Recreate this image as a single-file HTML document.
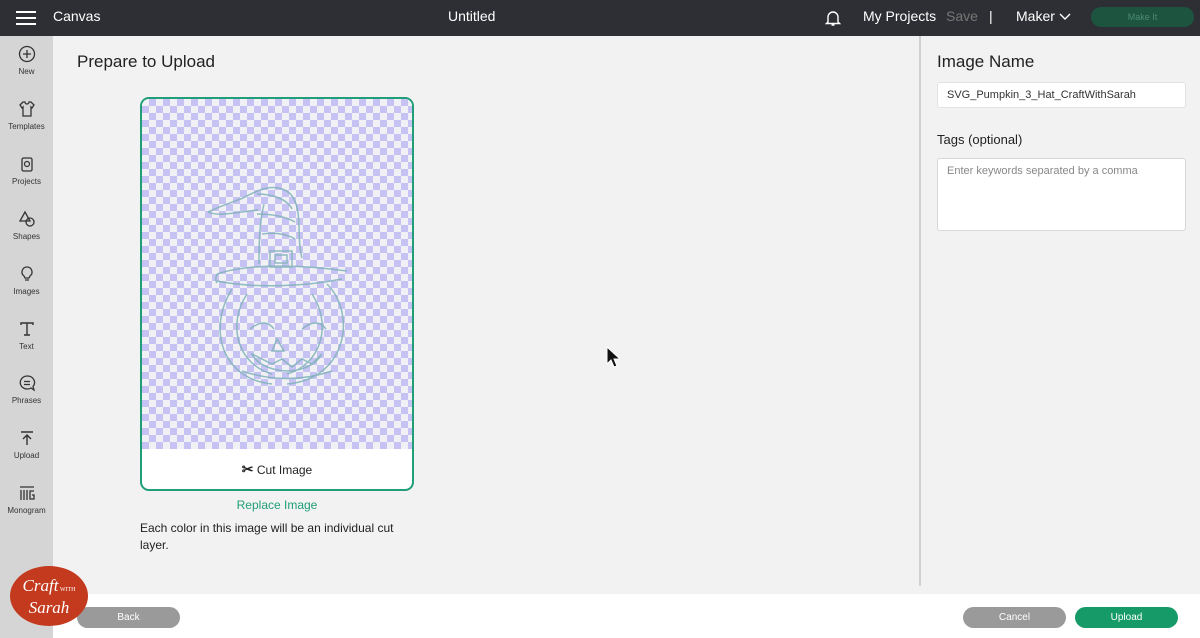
<!DOCTYPE html>
<html><head><meta charset="utf-8"><style>
*{margin:0;padding:0;box-sizing:border-box}
body{width:1200px;height:638px;overflow:hidden;background:#f2f2f2;font-family:"Liberation Sans",sans-serif;position:relative}
.top{position:absolute;left:0;top:0;width:1200px;height:36px;background:#2d2f34;color:#fff}
.top div{position:absolute;top:8px;font-size:14px}
.side{position:absolute;left:0;top:36px;width:53px;height:602px;background:#d5d5d5}
.si{position:absolute;left:0;width:53px;text-align:center;font-size:8px;color:#333}
.si svg{display:block;margin:0 auto 4px}
.bottom{position:absolute;left:53px;top:594px;width:1147px;height:44px;background:#fff}
.btn{position:absolute;top:607px;height:21px;border-radius:11px;color:#fff;font-size:10px;text-align:center;line-height:21px}
.card{position:absolute;left:140px;top:97px;width:274px;height:394px;border:2px solid #1f9e78;border-radius:9px;background:#fff;overflow:hidden}
.chk{position:absolute;left:0;top:0;width:270px;height:350px;background-color:#f1f1f5;background-image:linear-gradient(45deg,#c6c2f3 25%,transparent 25%,transparent 75%,#c6c2f3 75%),linear-gradient(45deg,#c6c2f3 25%,transparent 25%,transparent 75%,#c6c2f3 75%);background-size:14px 14px;background-position:0 0,7px 7px}
</style></head><body>
<div class="top">
<svg style="position:absolute;left:16px;top:10px" width="20" height="16"><path d="M0 2h20M0 8h20M0 14h20" stroke="#fff" stroke-width="2"/></svg>
<div style="left:53px">Canvas</div>
<div style="left:448px">Untitled</div>
<svg style="position:absolute;left:825px;top:9px" width="16" height="18" viewBox="0 0 16 18"><path d="M3 13V8a5 5 0 0 1 10 0v5l1.5 1.5h-13zM6.5 16h3" fill="none" stroke="#fff" stroke-width="1.4"/></svg>
<div style="left:863px">My Projects</div>
<div style="left:946px;color:#777">Save</div>
<div style="left:989px">|</div>
<div style="left:1016px">Maker</div>
<svg style="position:absolute;left:1059px;top:13px" width="12" height="8"><path d="M1 1l5 5 5-5" fill="none" stroke="#fff" stroke-width="1.4"/></svg>
<div style="left:1091px;top:7px;width:103px;height:20px;background:#1c5440;border-radius:10px;font-size:9px;color:#4c8a73;text-align:center;line-height:20px">Make It</div>
</div>
<div class="side">
<div class="si" style="top:9px"><svg width="18" height="18"><circle cx="9" cy="9" r="7.5" fill="none" stroke="#333" stroke-width="1.3"/><path d="M9 5v8M5 9h8" stroke="#333" stroke-width="1.3"/></svg>New</div>
<div class="si" style="top:64px"><svg width="18" height="18"><path d="M5 2l-3 3 2 3 1-1v9h8V7l1 1 2-3-3-3h-2a2 2 0 0 1-4 0z" fill="none" stroke="#333" stroke-width="1.3"/></svg>Templates</div>
<div class="si" style="top:119px"><svg width="18" height="18"><rect x="4" y="3" width="10" height="13" rx="1.5" fill="none" stroke="#333" stroke-width="1.3"/><circle cx="9" cy="9" r="2.5" fill="none" stroke="#333" stroke-width="1.2"/></svg>Projects</div>
<div class="si" style="top:174px"><svg width="18" height="18"><path d="M7 2L2 11h10z" fill="none" stroke="#333" stroke-width="1.3"/><circle cx="12" cy="12" r="4" fill="none" stroke="#333" stroke-width="1.3"/></svg>Shapes</div>
<div class="si" style="top:229px"><svg width="18" height="18"><path d="M9 2a5 5 0 0 0-3 9l1 2h4l1-2a5 5 0 0 0-3-9zM7 15h4" fill="none" stroke="#333" stroke-width="1.3"/></svg>Images</div>
<div class="si" style="top:284px"><svg width="18" height="18"><path d="M3 5V3h12v2M9 3v12M6 15h6" fill="none" stroke="#333" stroke-width="1.4"/></svg>Text</div>
<div class="si" style="top:338px"><svg width="18" height="18"><path d="M9 2a7 6.5 0 1 0 4 12l3 2-1-3.5A7 6.5 0 0 0 9 2z" fill="none" stroke="#333" stroke-width="1.3"/><path d="M6 7.5h6M6 10.5h6" stroke="#333" stroke-width="1.2"/></svg>Phrases</div>
<div class="si" style="top:393px"><svg width="18" height="18"><path d="M3 3h12M9 16V6M5 10l4-4 4 4" fill="none" stroke="#333" stroke-width="1.4"/></svg>Upload</div>
<div class="si" style="top:448px"><svg width="18" height="18"><path d="M2 3h14M3 6v10M6 6v10M9 6v10M16 7h-4v8h4v-4h-2" fill="none" stroke="#333" stroke-width="1.3"/></svg>Monogram</div>
</div>
<div style="position:absolute;left:77px;top:52px;font-size:17px;color:#222">Prepare to Upload</div>
<div class="card">
<div class="chk"></div>
<svg style="position:absolute;left:0;top:0" width="270" height="350" viewBox="0 0 270 350"><g fill="none" stroke="#7fb2b8" stroke-width="1.5" opacity="0.85">
<path d="M66 113c10-5 25-10 35-14 15-8 25-12 35-10 12 2 18 10 20 25 2 15 0 30 4 45"/>
<path d="M66 113c10 5 30 0 50-2"/><path d="M115 95c15 0 30 5 35 15M115 115c15 0 30 3 38 8M120 135c12-2 25 0 33 5"/>
<path d="M122 105c-5 20-5 45-5 60"/>
<path d="M75 175c30-10 80-10 130-3M75 182c40 8 90 5 125-2M75 175c-2 5-1 8 0 9"/>
<rect x="128" y="152" width="22" height="16"/><rect x="133" y="156" width="12" height="8"/>
<path d="M90 190c-25 40-10 90 40 95M185 185c30 30 20 95-40 100M105 195c-20 30-10 70 25 80M170 195c20 30 10 70-25 80"/>
<path d="M108 230c10-8 18-8 24 0M160 230c10-8 18-8 24 0M135 240l-5 12h12zM110 255c10 20 55 25 70 0l-10 10-10-5-10 8-10-8-10 5z"/>
<path d="M100 272c30 10 60 10 90 0"/></g></svg>
<div style="position:absolute;left:0;top:362px;width:270px;text-align:center;font-size:12px;color:#222"><span style="font-size:14px;font-weight:bold">✂</span> Cut Image</div>
</div>
<div style="position:absolute;left:140px;top:498px;width:274px;text-align:center;font-size:12px;color:#1f9e78">Replace Image</div>
<div style="position:absolute;left:140px;top:520px;width:262px;font-size:12px;color:#222;line-height:17px">Each color in this image will be an individual cut layer.</div>
<div style="position:absolute;left:919px;top:36px;width:2px;height:550px;background:#d0d0d0"></div>
<div style="position:absolute;left:937px;top:52px;font-size:17px;color:#222">Image Name</div>
<div style="position:absolute;left:937px;top:82px;width:249px;height:26px;background:#fff;border:1px solid #e2e2e2;border-radius:3px;font-size:11px;color:#333;padding:6px 9px">SVG_Pumpkin_3_Hat_CraftWithSarah</div>
<div style="position:absolute;left:937px;top:132px;font-size:13px;color:#222">Tags (optional)</div>
<div style="position:absolute;left:937px;top:158px;width:249px;height:73px;background:#fff;border:1px solid #d8d8d8;border-radius:3px;font-size:11px;color:#888;padding:6px 9px">Enter keywords separated by a comma</div>
<div class="bottom"></div>
<div class="btn" style="left:77px;width:103px;background:#9a9a9a">Back</div>
<div class="btn" style="left:963px;width:103px;background:#9a9a9a">Cancel</div>
<div class="btn" style="left:1075px;width:103px;background:#159a68">Upload</div>
<div style="position:absolute;left:10px;top:566px;width:78px;height:60px;border-radius:50%;background:#c33a1e;color:#fff;font-family:'Liberation Serif',serif;font-style:italic;text-align:center;font-size:17px;line-height:18px;padding-top:11px">Craft<span style="font-size:6px;font-style:normal"> WITH</span><br>Sarah</div>
<svg style="position:absolute;left:606px;top:346px" width="14" height="22"><path d="M1 1v17l4-4 3 7 3-1-3-7h6z" fill="#111" stroke="#fff" stroke-width="1"/></svg>
</body></html>
